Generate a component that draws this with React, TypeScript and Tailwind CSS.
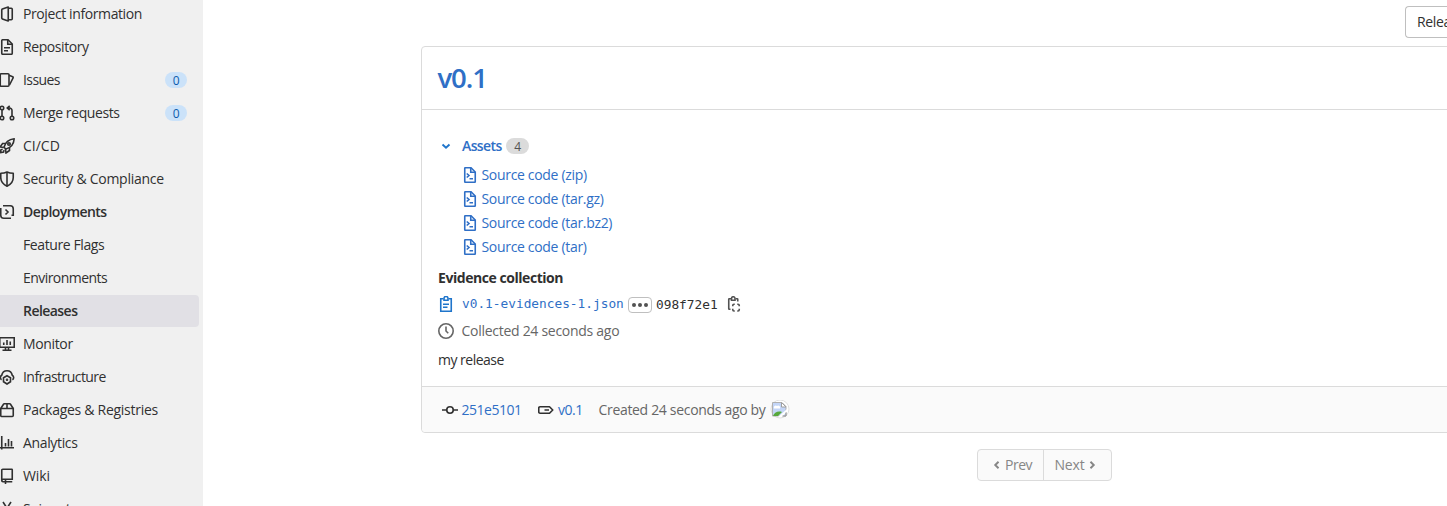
import type { ReactNode } from "react";

type IconProps = { children: ReactNode; className?: string; size?: number };

function Icon({ children, className = "", size = 16 }: IconProps) {
  return (
    <svg
      width={size}
      height={size}
      viewBox="0 0 16 16"
      fill="none"
      stroke="currentColor"
      strokeWidth="1.6"
      className={`shrink-0 ${className}`}
    >
      {children}
    </svg>
  );
}

const icons: Record<string, ReactNode> = {
  project: (
    <>
      <path d="M9.250 1v14L3.400 12.900a1 1 0 0 1-.65-.9V4a1 1 0 0 1 .65-.9z" strokeLinejoin="round" />
      <path d="M9.500 2.250h2.750a1 1 0 0 1 1 1v9.500a1 1 0 0 1-1 1H9.500" />
    </>
  ),
  doc: (
    <>
      <path d="M9 .75H3.750a1 1 0 0 0-1 1v12.500a1 1 0 0 0 1 1h8.500a1 1 0 0 0 1-1V5z" />
      <path d="M8.750 1v4.250H13M5 8.750h6M5 11.750h4" />
    </>
  ),
  issues: (
    <>
      <rect x="1.250" y="1.750" width="8.750" height="12.500" rx="1" />
      <path d="M10 3.250l3.700 1.500a.8.800 0 0 1 .4 1.100L10.500 13" />
    </>
  ),
  merge: (
    <>
      <circle cx="3" cy="3" r="1.750" />
      <circle cx="3" cy="13" r="1.750" />
      <circle cx="13" cy="13" r="1.750" />
      <path d="M3 5v6M13 11V5.500A2.500 2.500 0 0 0 10.500 3H8.500M10.700.8L8.250 3l2.450 2.200" />
    </>
  ),
  rocket: (
    <>
      <path d="M5 9.200C6.100 5 9.600 1.500 15.200.8 14.800 6 11.500 9.900 6.900 11.100z" strokeLinejoin="round" />
      <circle cx="10" cy="6" r="1.250" />
      <path d="M6.500 5.500H3.600L1 9l3.800.5M10.500 9.500v3L7 15l-.5-4M3.600 11.200L1.600 12l.2 2.600 2.800-.6.400-1.800" />
    </>
  ),
  shield: (
    <>
      <path d="M8 1c2 .9 4.200 1.250 6.250 1.300v4.200c0 4-2.500 7-6.250 8.700C4.250 13.500 1.750 10.500 1.750 6.500V2.300C3.800 2.250 6 1.900 8 1z" strokeLinejoin="round" />
      <path d="M8 1v14" />
    </>
  ),
  deployments: (
    <path d="M0 4.750h1.750v6.500a3 3 0 0 0 3 3H12M4 1.750h7.250a3 3 0 0 1 3 3v6.500H12.500M6.500 5.500L9 8l-2.500 2.500" />
  ),
  monitor: (
    <path d="M.75 1.750h14.500v9.500H.750zM4.750 6.500v2.500M8 4v5M11.250 5.500V9M6.500 11v3M9.500 11v3M3.500 14.250h9" />
  ),
  infrastructure: (
    <>
      <path d="M2.600 10.800A2.600 2.600 0 0 1 2.750 6.250C3.200 3.700 5.300 1.750 8 1.750s4.800 1.950 5.250 4.500a2.600 2.600 0 0 1 .15 4.550" />
      <path d="M8 6.750l3.500 2v4L8 15l-3.500-2.250v-4z" />
      <circle cx="8" cy="10.800" r=".5" />
    </>
  ),
  package: (
    <path d="M1.750 6.500h12.500v7a1 1 0 0 1-1 1H2.750a1 1 0 0 1-1-1zM1.750 6.500L4.500 2.200a1 1 0 0 1 .8-.45h5.400a1 1 0 0 1 .8.450l2.750 4.300M8 1.750V6.500" />
  ),
  chart: <path d="M2.750 1v13.500M0 12.750h15M6.500 8v3.500M9.500 4v7.500M12.500 6v5.500" />,
  wiki: (
    <>
      <path d="M4 11.250h9.250v-9.500a.5.5 0 0 0-.5-.5H3.750a1 1 0 0 0-1 1V12.500a1.250 1.250 0 0 0 1.250 1.250h9.250M2.800 12.500A1.250 1.250 0 0 1 4 11.250" />
      <path d="M6.500 12v4" />
    </>
  ),
  snippets: (
    <path d="M4 1l6.500 10M12 1L5.500 11M5 13a1.750 1.750 0 1 1-3.500 0A1.750 1.750 0 0 1 5 13zM14.500 13a1.750 1.750 0 1 1-3.500 0 1.750 1.750 0 0 1 3.500 0z" />
  ),
};

type NavItem = {
  label: string;
  icon?: string;
  count?: number;
  bold?: boolean;
  active?: boolean;
  tracking?: string;
};

const nav: NavItem[] = [
  { label: "Project information", icon: "project", tracking: "tracking-[-0.4px]" },
  { label: "Repository", icon: "doc", tracking: "tracking-[-0.42px]" },
  { label: "Issues", icon: "issues", count: 0, tracking: "tracking-[-0.6px]" },
  { label: "Merge requests", icon: "merge", count: 0, tracking: "tracking-[-0.4px]" },
  { label: "CI/CD", icon: "rocket", tracking: "tracking-[0px]" },
  { label: "Security & Compliance", icon: "shield", tracking: "tracking-[-0.26px]" },
  { label: "Deployments", icon: "deployments", bold: true },
  { label: "Feature Flags", tracking: "tracking-[-0.4px]" },
  { label: "Environments", tracking: "tracking-[-0.55px]" },
  { label: "Releases", bold: true, active: true },
  { label: "Monitor", icon: "monitor" },
  { label: "Infrastructure", icon: "infrastructure", tracking: "tracking-[-0.55px]" },
  { label: "Packages & Registries", icon: "package", tracking: "tracking-[-0.28px]" },
  { label: "Analytics", icon: "chart" },
  { label: "Wiki", icon: "wiki", tracking: "tracking-[-0.1px]" },
  { label: "Snippets", icon: "snippets" },
];

function Sidebar() {
  return (
    <nav className="-mt-0.5 flex h-[508px] w-[203px] shrink-0 flex-col gap-px overflow-hidden bg-[#f0f0f0] pr-1 text-[#303030]">
      {nav.map((item) => (
        <a
          key={item.label}
          className={`flex h-8 shrink-0 items-center rounded-r pr-3 ${item.active ? "bg-[#e1e0e5]" : ""}`}
        >
          <span className="-ml-px mr-2 flex size-4 shrink-0">
            {item.icon && <Icon>{icons[item.icon]}</Icon>}
          </span>
          <span
            className={`grow whitespace-nowrap ${item.bold ? "font-semibold tracking-[-0.55px]" : item.tracking ?? ""}`}
          >
            {item.label}
          </span>
          {item.count !== undefined && (
            <span className="flex h-4 w-[22px] items-center justify-center rounded-full bg-[#cbe2f9] pt-px text-xs text-[#0b5cad]">
              {item.count}
            </span>
          )}
        </a>
      ))}
    </nav>
  );
}

const sources = ["zip", "tar.gz", "tar.bz2", "tar"];

function Assets() {
  return (
    <section>
      <div className="flex h-6 items-center text-[#1f75cb]">
        <Icon size={16}>
          <path d="M4.500 6.500L8 9.750l3.500-3.250" strokeWidth="1.900" />
        </Icon>
        <span className="ml-2 w-10 font-semibold tracking-[-0.6px] text-[#2f6fc6]">Assets</span>
        <span className="ml-1 flex h-4 w-[23px] items-center justify-center rounded-full bg-[#dbdbdb] pt-px text-xs text-[#525252]">
          4
        </span>
      </div>
      <ul className="mt-[5px] pl-6 text-[#2f6fc6]">
        {sources.map((ext) => (
          <li key={ext} className="flex h-6 items-center">
            <Icon>
              <path d="M9 .750H3.250a.5.5 0 0 0-.5.5v13.500a.5.5 0 0 0 .5.5h9.500a.5.5 0 0 0 .5-.5V5z" />
              <path d="M8.750 1v4.250H13M4.750 6.500l2.250 2-2.250 2M7.500 11.750h3.500" />
            </Icon>
            <span className="ml-[3.500px] tracking-[-0.32px]">Source code ({ext})</span>
          </li>
        ))}
      </ul>
    </section>
  );
}

function Evidence() {
  return (
    <section>
      <h3 className="mt-[9px] flex h-5 items-center font-bold tracking-[-0.45px]">Evidence collection</h3>
      <div className="mt-[5px] flex h-[22px] items-center font-['DejaVu_Sans_Mono','Liberation_Mono',monospace] text-[12.8px] tracking-normal">
        <Icon className="text-[#1f75cb]">
          <path d="M5.500 2.750H2.750v12.500h10.500V2.750H10.500M5 8.250h6M5 11.250h4.500" />
          <path d="M6 4.250V2.500a2 2 0 0 1 4 0v1.750z" />
        </Icon>
        <span className="ml-2 w-[162px] text-[#2f6fc6]">v0.1-evidences-1.json</span>
        <button className="ml-1 mt-0.5 flex h-4 w-6 items-center justify-center gap-[2px] rounded border border-[#bfbfbf]">
          <i className="size-1 rounded-full bg-[#525252]" />
          <i className="size-1 rounded-full bg-[#525252]" />
          <i className="size-1 rounded-full bg-[#525252]" />
        </button>
        <span className="ml-1 mt-0.5 w-[62px]">098f72e1</span>
        <Icon className="ml-2 text-[#525252]">
          <path d="M4.500 13.250H3.250a.5.5 0 0 1-.5-.5V3.250a.5.5 0 0 1 .5-.5h2M9.500 2.750h1.750a.5.5 0 0 1 .5.5V5.500" />
          <path d="M5.500 4.250V2.500a1.750 1.750 0 0 1 3.500 0v1.750z" />
          <path d="M6.750 10.250V9.500a1.250 1.250 0 0 1 1.250-1.250h.75M11.250 8.250H12a1.250 1.250 0 0 1 1.250 1.250v.75M13.250 12.750v1A1.250 1.250 0 0 1 12 15h-.75M8.750 15H8a1.250 1.250 0 0 1-1.250-1.250v-1" />
        </Icon>
      </div>
      <div className="mt-1 flex h-6 items-center text-[#666]">
        <Icon>
          <circle cx="8" cy="8" r="7.200" />
          <path d="M8 3.500V8l2.250 2.250" />
        </Icon>
        <span className="ml-[7.500px] tracking-[-0.28px]">Collected 24 seconds ago</span>
      </div>
    </section>
  );
}

function BrokenAvatar() {
  return (
    <svg width="20" height="20" viewBox="0 0 20 20" className="shrink-0">
      <circle cx="10" cy="9" r="9" fill="#fff" stroke="#e0e0e0" />
      <path d="M2.500 2.500h9.500l4 4v9.500H2.500z" fill="#c3d5f7" stroke="#b0b0b0" />
      <path d="M4 8.500a2 2 0 0 1 3-2.500 2 2 0 0 1 3 2.500z" fill="#fff" />
      <path d="M3 16c1-3.500 5-5.500 9-4l-4 4z" fill="#57a83b" />
      <path d="M11.500 2.500V7H16z" fill="#fff" stroke="#a0a0a0" />
      <path d="M8 17l9-8v2.500l-5 5.500z" fill="#fff" />
      <path d="M12.500 16H16v-3.500" fill="none" stroke="#999" />
    </svg>
  );
}

function ReleaseCard() {
  return (
    <article className="w-[1246px] rounded border border-[#dbdbdb]">
      <header className="flex h-[63px] items-center border-b border-[#dbdbdb] pl-[15.500px]">
        <h2 className="text-[27.500px] font-semibold tracking-[-1.100px] text-[#2f6fc6]">v0.1</h2>
      </header>
      <div className="h-[276px] pl-4 pt-6">
        <Assets />
        <Evidence />
        <p className="mt-[5px] flex h-6 items-center tracking-[-0.500px]">my release</p>
      </div>
      <footer className="flex h-[46px] items-center rounded-b border-t border-[#dbdbdb] bg-[#fafafa] pl-5 text-[#666]">
        <Icon className="text-[#303030]">
          <circle cx="8" cy="8" r="3.250" />
          <path d="M0 8h4.500M11.500 8H16" />
        </Icon>
        <span className="ml-[3.500px] w-[76.500px] tracking-[-0.500px] text-[#2f6fc6]">251e5101</span>
        <Icon className="text-[#303030]">
          <path d="M2 4.750h9.500L14.750 8l-3.250 3.250H2A1.250 1.250 0 0 1 .750 10V6A1.250 1.250 0 0 1 2 4.750zM6.500 8H11" strokeLinejoin="round" />
        </Icon>
        <span className="ml-1 w-[40.500px] tracking-[-0.500px] text-[#2f6fc6]">v0.1</span>
        <span className="w-[171.500px] whitespace-nowrap tracking-[-0.32px]">Created 24 seconds ago by</span>
        <BrokenAvatar />
      </footer>
    </article>
  );
}

export default function App() {
  return (
    <div className="flex h-[506px] w-[1447px] overflow-hidden bg-white font-['Open_Sans',sans-serif] text-[14px] leading-5 tracking-[-0.35px] text-[#303030]">
      <Sidebar />
      <main className="ml-[218px] flex grow flex-col overflow-hidden">
        <div className="flex h-[46px] shrink-0 justify-end pt-1.5">
          <div className="flex h-8 w-[42px] items-center overflow-hidden rounded-l border border-r-0 border-[#bfbfbf] pl-[11px]">
            Releases
          </div>
        </div>
        <ReleaseCard />
        <div className="mt-4 flex w-[1246px] justify-center text-[#868686]">
          <div className="flex h-8 w-[135px] rounded border border-[#dbdbdb] bg-[#fafafa]">
            <span className="flex w-[66px] items-center border-r border-[#dbdbdb] pl-3">
              <Icon size={14}>
                <path d="M9.750 4.250L6 8l3.750 3.750" strokeWidth="2.200" />
              </Icon>
              <span className="ml-[1.500px] tracking-[-0.5px]">Prev</span>
            </span>
            <span className="flex items-center pl-[11px]">
              <span className="tracking-[-0.2px]">Next</span>
              <Icon size={14} className="ml-px">
                <path d="M6.250 4.250L10 8l-3.750 3.750" strokeWidth="2.200" />
              </Icon>
            </span>
          </div>
        </div>
      </main>
    </div>
  );
}
